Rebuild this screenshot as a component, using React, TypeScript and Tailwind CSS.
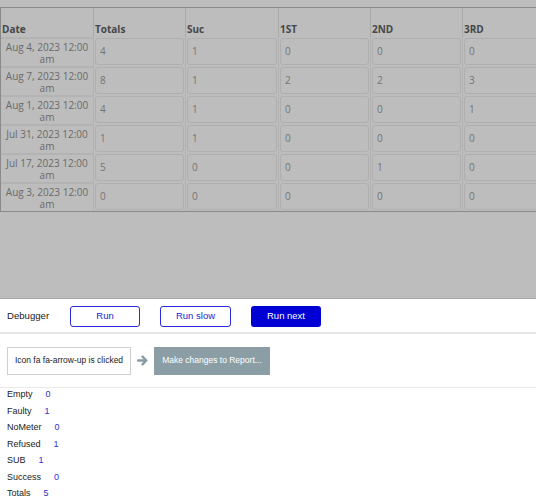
import React from "react";

const rows: [string, number, number, number, number, number][] = [
  ["Aug 4, 2023 12:00 am", 4, 1, 0, 0, 0],
  ["Aug 7, 2023 12:00 am", 8, 1, 2, 2, 3],
  ["Aug 1, 2023 12:00 am", 4, 1, 0, 0, 1],
  ["Jul 31, 2023 12:00 am", 1, 1, 0, 0, 0],
  ["Jul 17, 2023 12:00 am", 5, 0, 0, 1, 0],
  ["Aug 3, 2023 12:00 am", 0, 0, 0, 0, 0],
];

const headers = ["Date", "Totals", "Suc", "1ST", "2ND", "3RD"];

const stats: [string, number][] = [
  ["Empty", 0],
  ["Faulty", 1],
  ["NoMeter", 0],
  ["Refused", 1],
  ["SUB", 1],
  ["Success", 0],
  ["Totals", 5],
];

export default function App() {
  return (
    <div
      className="w-[536px] h-[500px] overflow-hidden bg-white"
      style={{ fontFamily: '"Liberation Sans", Arial, sans-serif' }}
    >
      <div className="h-[298px] bg-[#bdbdbd] pt-[7px] overflow-hidden">
        <div
          className="w-[553px] border border-r-0 border-[#8a8a8a]"
          style={{ fontFamily: '"Open Sans", sans-serif' }}
        >
          <div className="grid grid-cols-[92px_92px_93px_92px_92px_92px] h-[29px]">
            {headers.map((h, i) => (
              <div
                key={h}
                className={`flex items-end pl-[1px] pb-[1px] text-[10px] leading-[14px] font-bold text-[#474747] ${
                  i > 0 ? "border-l border-[#aaaaaa]" : ""
                }`}
              >
                {h}
              </div>
            ))}
          </div>
          {rows.map((r, ri) => (
            <div
              key={ri}
              className="grid grid-cols-[92px_92px_93px_92px_92px_92px] h-[29px]"
            >
              <div className="flex items-center justify-center text-center px-[3px] text-[10px] leading-[12px] text-[#6a6a6a] border-t-2 border-[#b3b3b3]">
                {r[0]}
              </div>
              {r.slice(1).map((v, ci) => (
                <div key={ci} className="pt-[1px] px-[1px] border-l border-[#b3b3b3]">
                  <div className="h-[27px] rounded-[3px] border border-[#afafaf] flex items-center pl-[4px] text-[10px] text-[#747474]">
                    {v}
                  </div>
                </div>
              ))}
            </div>
          ))}
        </div>
      </div>

      <div className="border-t border-[#a8a8a8] h-[36px] pt-[1px] flex items-center px-[7px] gap-[20px] border-b-2 border-b-[#e6e6e6]">
        <span className="text-[9.6px] text-[#222] w-[43px]">Debugger</span>
        <button className="w-[70px] h-[21px] rounded-[3px] border border-[#2a2ae0] text-[#2424cc] text-[9.5px] flex items-center justify-center">
          Run
        </button>
        <button className="w-[71px] h-[21px] rounded-[3px] border border-[#2a2ae0] text-[#2424cc] text-[9.5px] flex items-center justify-center">
          Run slow
        </button>
        <button className="w-[70px] h-[21px] rounded-[3px] bg-[#0000d4] text-white text-[9.5px] flex items-center justify-center">
          Run next
        </button>
      </div>

      <div className="h-[54px] flex items-center px-[7px] border-b border-[#eaeaea]">
        <div className="w-[124px] h-[28px] border border-[#cfcfcf] flex items-center justify-center text-[8.5px] text-[#222]">
          Icon fa fa-arrow-up is clicked
        </div>
        <div className="w-[23px] flex items-center justify-center">
          <svg width="11" height="11" viewBox="0 0 12 12">
            <path
              d="M1 6H10M6 1.8L10.2 6L6 10.2"
              fill="none"
              stroke="#8a9ba3"
              strokeWidth="2.6"
              strokeLinecap="round"
              strokeLinejoin="round"
            />
          </svg>
        </div>
        <div className="w-[116px] h-[28px] bg-[#8c9ea5] flex items-center justify-center text-[8.5px] text-white">
          Make changes to Report...
        </div>
      </div>

      <div className="pl-[7px]">
        {stats.map(([k, v]) => (
          <div key={k} className="h-[16.5px] flex items-start text-[9px] leading-[12px]">
            <span className="text-[#222]">{k}</span>
            <span className="ml-[13px] text-[#3030d0]">{v}</span>
          </div>
        ))}
      </div>
    </div>
  );
}
